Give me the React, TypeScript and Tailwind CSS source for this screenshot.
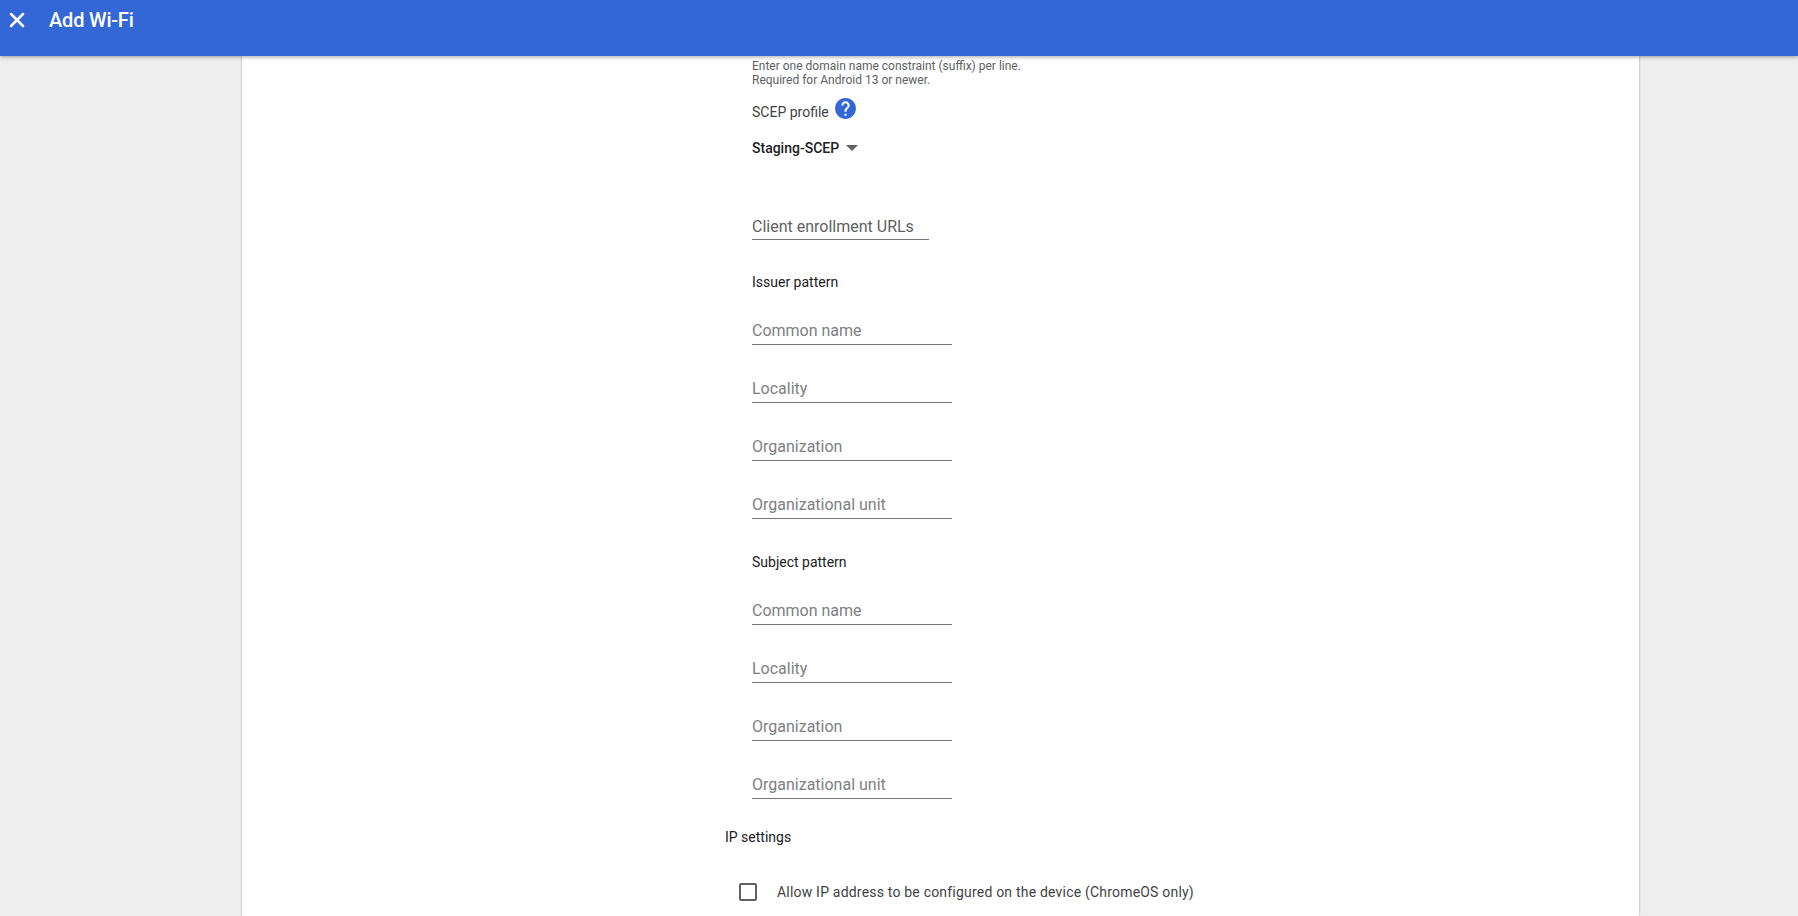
import { X } from 'lucide-react';

function Field({ label, first }: { label: string; first?: boolean }) {
  return (
    <div
      className={`w-[200px] h-[29px] border-b border-[#757575] text-[16px] leading-[24px] pt-[3px] text-[#808080] ${
        first ? 'mt-[34px]' : 'mt-[29px]'
      }`}
    >
      {label}
    </div>
  );
}

function PatternGroup({ title }: { title: string }) {
  return (
    <div className="mt-[34px]">
      <div className="text-[14px] leading-[18px] text-[#212121]">{title}</div>
      <div className="-mt-[9px]">
        <Field label="Common name" first />
        <Field label="Locality" />
        <Field label="Organization" />
        <Field label="Organizational unit" />
      </div>
    </div>
  );
}

export default function App() {
  return (
    <div className="h-[916px] flex flex-col overflow-hidden bg-[#eeeeee] font-['Roboto',sans-serif]">
      <header className="relative z-10 h-14 shrink-0 bg-[#3367d6] shadow-[0_1px_4px_rgba(0,0,0,0.35)] flex items-start text-white">
        <X className="ml-[5px] mt-[8px] w-[24px] h-[24px]" strokeWidth={2.5} />
        <h1 className="ml-[20px] mt-[7px] text-[20px] leading-[26px] font-medium tracking-[-0.2px]">Add Wi-Fi</h1>
      </header>
      <main className="ml-[242px] w-[1397px] flex-1 bg-white shadow-[0_0_2px_rgba(0,0,0,0.35)]">
        <div className="pl-[510px] pt-[3px]">
          <p className="text-[12px] leading-[14px] text-[#616161]">
            Enter one domain name constraint (suffix) per line.
            <br />
            Required for Android 13 or newer.
          </p>
          <div className="mt-[8px] flex items-center gap-[4px] h-[26px] text-[14px] text-[#424242]">
            <span className="mt-[8px]">SCEP profile</span>
            <svg viewBox="0 0 24 24" className="w-[25px] h-[25px] fill-[#3367d6]">
              <path d="M12 2C6.48 2 2 6.48 2 12s4.48 10 10 10 10-4.48 10-10S17.52 2 12 2zm1 17h-2v-2h2v2zm2.07-7.75l-.9.92C13.45 12.9 13 13.5 13 15h-2v-.5c0-1.1.45-2.1 1.17-2.83l1.24-1.26c.37-.36.59-.86.59-1.41 0-1.1-.9-2-2-2s-2 .9-2 2H8c0-2.21 1.79-4 4-4s4 1.79 4 4c0 .88-.36 1.68-.93 2.25z" />
            </svg>
          </div>
          <div className="mt-[17px] flex items-center h-[20px] text-[14px] font-medium text-[#212121]">
            Staging-SCEP
            <span className="ml-[7px] w-0 h-0 border-x-[6px] border-x-transparent border-t-[6px] border-t-[#616161]" />
          </div>
          <div className="mt-[48px] -mb-[1px] w-[177px] h-[34px] border-b border-[#757575] text-[16px] leading-[24px] pt-[9px] text-[#616161]">
            Client enrollment URLs
          </div>
          <PatternGroup title="Issuer pattern" />
          <PatternGroup title="Subject pattern" />
          <div className="-ml-[27px] mt-[29px] text-[14px] leading-[18px] text-[#212121]">IP settings</div>
          <label className="-ml-[13px] mt-[36px] flex items-center text-[14px] tracking-[0.2px] leading-[20px] text-[#424242]">
            <span className="w-[18px] h-[18px] rounded-[2px] border-2 border-[#616161]" />
            <span className="ml-[20px]">Allow IP address to be configured on the device (ChromeOS only)</span>
          </label>
        </div>
      </main>
    </div>
  );
}
